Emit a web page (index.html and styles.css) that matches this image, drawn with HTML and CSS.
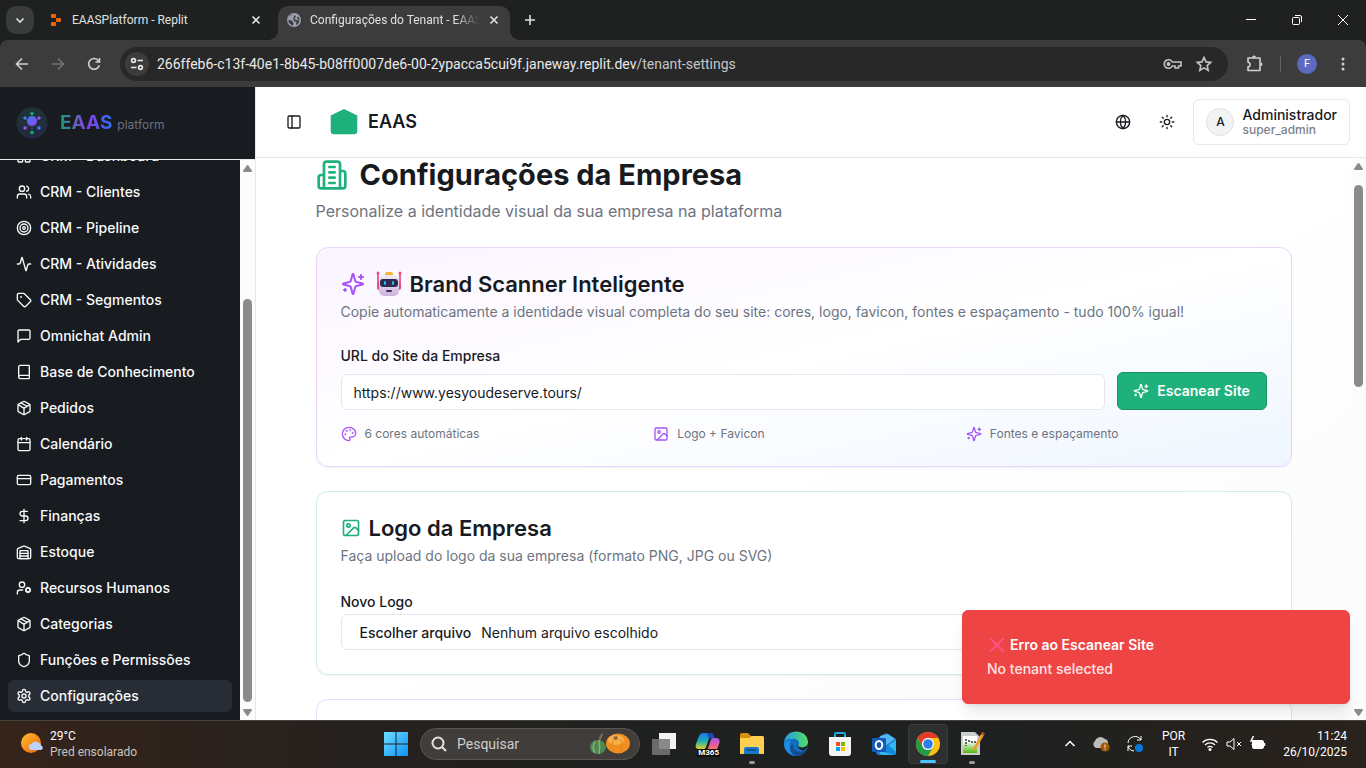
FILE: index.html
```html
<!DOCTYPE html>
<html lang="pt">
<head>
<meta charset="utf-8">
<title>Configurações do Tenant - EAAS</title>
<link rel="stylesheet" href="styles.css">
</head>
<body>
<svg class="sprite" aria-hidden="true">
  <symbol id="dashboard" viewBox="0 0 24 24"><rect x="3" y="3" width="7" height="9" rx="1"/><rect x="14" y="3" width="7" height="5" rx="1"/><rect x="14" y="12" width="7" height="9" rx="1"/><rect x="3" y="16" width="7" height="5" rx="1"/></symbol>
  <symbol id="users" viewBox="0 0 24 24"><path d="M16 21v-2a4 4 0 0 0-4-4H6a4 4 0 0 0-4 4v2"/><circle cx="9" cy="7" r="4"/><path d="M22 21v-2a4 4 0 0 0-3-3.87M16 3.13a4 4 0 0 1 0 7.75"/></symbol>
  <symbol id="target" viewBox="0 0 24 24"><circle cx="12" cy="12" r="10"/><circle cx="12" cy="12" r="6"/><circle cx="12" cy="12" r="2"/></symbol>
  <symbol id="activity" viewBox="0 0 24 24"><path d="M22 12h-2.48a2 2 0 0 0-1.93 1.46l-2.35 8.36a.25.25 0 0 1-.48 0L9.24 2.18a.25.25 0 0 0-.48 0l-2.35 8.36A2 2 0 0 1 4.49 12H2"/></symbol>
  <symbol id="tag" viewBox="0 0 24 24"><path d="M12.586 2.586A2 2 0 0 0 11.172 2H4a2 2 0 0 0-2 2v7.172a2 2 0 0 0 .586 1.414l8.704 8.704a2.426 2.426 0 0 0 3.42 0l6.58-6.58a2.426 2.426 0 0 0 0-3.42z"/><circle cx="7.5" cy="7.5" r=".5"/></symbol>
  <symbol id="message" viewBox="0 0 24 24"><path d="M21 15a2 2 0 0 1-2 2H7l-4 4V5a2 2 0 0 1 2-2h14a2 2 0 0 1 2 2z"/></symbol>
  <symbol id="book" viewBox="0 0 24 24"><path d="M4 19.5v-15A2.5 2.5 0 0 1 6.5 2H19a1 1 0 0 1 1 1v18a1 1 0 0 1-1 1H6.5a1 1 0 0 1 0-5H20"/></symbol>
  <symbol id="package" viewBox="0 0 24 24"><path d="M11 21.73a2 2 0 0 0 2 0l7-4A2 2 0 0 0 21 16V8a2 2 0 0 0-1-1.73l-7-4a2 2 0 0 0-2 0l-7 4A2 2 0 0 0 3 8v8a2 2 0 0 0 1 1.73zM12 22V12"/><path d="m3.3 7 7.703 4.734a2 2 0 0 0 1.994 0L20.7 7M7.5 4.27l9 5.15"/></symbol>
  <symbol id="calendar" viewBox="0 0 24 24"><path d="M8 2v4M16 2v4M3 10h18"/><rect x="3" y="4" width="18" height="18" rx="2"/></symbol>
  <symbol id="card" viewBox="0 0 24 24"><rect x="2" y="5" width="20" height="14" rx="2"/><path d="M2 10h20"/></symbol>
  <symbol id="dollar" viewBox="0 0 24 24"><path d="M12 2v20M17 5H9.5a3.5 3.5 0 0 0 0 7h5a3.5 3.5 0 0 1 0 7H6"/></symbol>
  <symbol id="warehouse" viewBox="0 0 24 24"><path d="M22 8.35V20a2 2 0 0 1-2 2H4a2 2 0 0 1-2-2V8.35A2 2 0 0 1 3.26 6.5l8-3.2a2 2 0 0 1 1.48 0l8 3.2A2 2 0 0 1 22 8.35ZM6 18h12M6 14h12"/><rect x="6" y="10" width="12" height="12"/></symbol>
  <symbol id="usercog" viewBox="0 0 24 24"><circle cx="18" cy="15" r="3"/><circle cx="9" cy="7" r="4"/><path d="M10 15H6a4 4 0 0 0-4 4v2M21.7 16.4l-.9-.3M15.2 13.9l-.9-.3M16.6 18.7l.3-.9M19.1 12.2l.3-.9M19.6 18.7l-.4-1M16.8 12.3l-.4-1M14.3 16.6l1-.4M20.7 13.8l1-.4"/></symbol>
  <symbol id="shield" viewBox="0 0 24 24"><path d="M20 13c0 5-3.5 7.5-7.66 8.95a1 1 0 0 1-.67-.01C7.5 20.5 4 18 4 13V6a1 1 0 0 1 1-1c2 0 4.5-1.2 6.24-2.72a1.17 1.17 0 0 1 1.52 0C14.51 3.81 17 5 19 5a1 1 0 0 1 1 1z"/></symbol>
  <symbol id="settings" viewBox="0 0 24 24"><path d="M12.22 2h-.44a2 2 0 0 0-2 2v.18a2 2 0 0 1-1 1.73l-.43.25a2 2 0 0 1-2 0l-.15-.08a2 2 0 0 0-2.73.73l-.22.38a2 2 0 0 0 .73 2.73l.15.1a2 2 0 0 1 1 1.72v.51a2 2 0 0 1-1 1.74l-.15.09a2 2 0 0 0-.73 2.73l.22.38a2 2 0 0 0 2.73.73l.15-.08a2 2 0 0 1 2 0l.43.25a2 2 0 0 1 1 1.73V20a2 2 0 0 0 2 2h.44a2 2 0 0 0 2-2v-.18a2 2 0 0 1 1-1.73l.43-.25a2 2 0 0 1 2 0l.15.08a2 2 0 0 0 2.73-.73l.22-.39a2 2 0 0 0-.73-2.73l-.15-.08a2 2 0 0 1-1-1.74v-.5a2 2 0 0 1 1-1.74l.15-.09a2 2 0 0 0 .73-2.73l-.22-.38a2 2 0 0 0-2.73-.73l-.15.08a2 2 0 0 1-2 0l-.43-.25a2 2 0 0 1-1-1.73V4a2 2 0 0 0-2-2z"/><circle cx="12" cy="12" r="3"/></symbol>
  <symbol id="panel" viewBox="0 0 24 24"><rect x="3" y="3" width="18" height="18" rx="2"/><path d="M9 3v18"/></symbol>
  <symbol id="globe" viewBox="0 0 24 24"><circle cx="12" cy="12" r="10"/><path d="M12 2a14.5 14.5 0 0 0 0 20 14.5 14.5 0 0 0 0-20M2 12h20"/></symbol>
  <symbol id="sun" viewBox="0 0 24 24"><circle cx="12" cy="12" r="4"/><path d="M12 2v2M12 20v2M4.93 4.93l1.41 1.41M17.66 17.66l1.41 1.41M2 12h2M20 12h2M6.34 17.66l-1.41 1.41M19.07 4.93l-1.41 1.41"/></symbol>
  <symbol id="building" viewBox="0 0 24 24"><path d="M6 22V4a2 2 0 0 1 2-2h8a2 2 0 0 1 2 2v18ZM6 12H4a2 2 0 0 0-2 2v6a2 2 0 0 0 2 2h2M18 9h2a2 2 0 0 1 2 2v9a2 2 0 0 1-2 2h-2M10 6h4M10 10h4M10 14h4M10 18h4"/></symbol>
  <symbol id="sparkles" viewBox="0 0 24 24"><path d="M9.937 15.5A2 2 0 0 0 8.5 14.063l-6.135-1.582a.5.5 0 0 1 0-.962L8.5 9.936A2 2 0 0 0 9.937 8.5l1.582-6.135a.5.5 0 0 1 .963 0L14.063 8.5A2 2 0 0 0 15.5 9.937l6.135 1.581a.5.5 0 0 1 0 .964L15.5 14.063a2 2 0 0 0-1.437 1.437l-1.582 6.135a.5.5 0 0 1-.963 0zM20 3v4M22 5h-4M4 17v2M5 18H3"/></symbol>
  <symbol id="palette" viewBox="0 0 24 24"><circle cx="13.5" cy="6.5" r=".5"/><circle cx="17.5" cy="10.5" r=".5"/><circle cx="8.5" cy="7.5" r=".5"/><circle cx="6.5" cy="12.5" r=".5"/><path d="M12 2C6.5 2 2 6.5 2 12s4.5 10 10 10c.926 0 1.648-.746 1.648-1.688 0-.437-.18-.835-.437-1.125-.29-.289-.438-.652-.438-1.125a1.64 1.64 0 0 1 1.668-1.668h1.996c3.051 0 5.555-2.503 5.555-5.554C21.965 6.012 17.461 2 12 2z"/></symbol>
  <symbol id="image" viewBox="0 0 24 24"><rect x="3" y="3" width="18" height="18" rx="2"/><circle cx="9" cy="9" r="2"/><path d="m21 15-3.086-3.086a2 2 0 0 0-2.828 0L6 21"/></symbol>
</svg>

<div class="tabstrip">
  <button class="tab-search" aria-label="Pesquisar guias"><svg width="12" height="12" viewBox="0 0 12 12"><path d="M2.500 4.500 6 8l3.500-3.500"/></svg></button>
  <div class="tab">
    <svg class="favicon" width="16" height="16" viewBox="0 0 16 16"><g fill="#f26207"><rect x="3" y="2" width="5" height="4" rx="1"/><rect x="8" y="6" width="5" height="4" rx="1"/><rect x="3" y="10" width="5" height="4" rx="1"/></g></svg>
    <span class="tab-title">EAASPlatform - Replit</span>
    <button class="tab-close" aria-label="Fechar guia"><svg width="12" height="12" viewBox="0 0 12 12"><path d="m2.500 2.500 7 7m0-7-7 7"/></svg></button>
  </div>
  <div class="tab tab-active">
    <svg class="favicon" width="16" height="16" viewBox="0 0 16 16"><circle cx="8" cy="8" r="7" fill="#9aa0ac"/><path d="M7 2 3 4.500 2 8l3.500.500 2 2L7 14l-4-3-1-4 2-4zM9 3l1 2-2 1.500 2 1.500 3.500.500L12 12l-2 1 .500-3L8 9 7 6zM12 4l2 4-3-1z" fill="#3c3c3c"/></svg>
    <span class="tab-title">Configurações do Tenant - EAAS</span>
    <button class="tab-close" aria-label="Fechar guia"><svg width="12" height="12" viewBox="0 0 12 12"><path d="m2.500 2.500 7 7m0-7-7 7"/></svg></button>
  </div>
  <button class="new-tab" aria-label="Nova guia"><svg width="12" height="12" viewBox="0 0 12 12"><path d="M6 1v10M1 6h10"/></svg></button>
  <div class="window-controls">
    <button aria-label="Minimizar"><svg width="12" height="12" viewBox="0 0 12 12"><path d="M1 5.500h10"/></svg></button>
    <button aria-label="Restaurar"><svg width="12" height="12" viewBox="0 0 12 12"><rect x="1.500" y="3.500" width="7" height="7" rx="1"/><path d="M4 1.500h5a1.500 1.500 0 0 1 1.500 1.500v5"/></svg></button>
    <button aria-label="Fechar"><svg width="12" height="12" viewBox="0 0 12 12"><path d="m1 1 10 10M11 1 1 11"/></svg></button>
  </div>
</div>
<div class="toolbar-wrap">
<div class="toolbar">
  <div class="nav-buttons">
    <button aria-label="Voltar"><svg width="16" height="16" viewBox="0 0 16 16"><path d="M14 8H3M8 2.500 2.500 8 8 13.500"/></svg></button>
    <button class="dim" aria-label="Avançar"><svg width="16" height="16" viewBox="0 0 16 16"><path d="M2 8h11M8 2.500 13.500 8 8 13.500"/></svg></button>
    <button aria-label="Recarregar"><svg width="16" height="16" viewBox="0 0 16 16"><path d="M13.300 9.200A5.400 5.400 0 1 1 12 4.200l1.500 1.500M13.500 2v4h-4"/></svg></button>
  </div>
  <div class="omnibox">
    <button class="site-info" aria-label="Informações do site"><svg width="16" height="16" viewBox="0 0 16 16"><circle cx="4.500" cy="4.500" r="1.900"/><path d="M8.500 4.500H14M2 11.500h5.500"/><circle cx="11.500" cy="11.500" r="1.900"/></svg></button>
    <div class="url"><span>266ffeb6-c13f-40e1-8b45-b08ff0007de6-00-2ypacca5cui9f.janeway.replit.dev</span><span class="path">/tenant-settings</span></div>
    <button class="omni-btn" aria-label="Senhas"><svg width="20" height="20" viewBox="0 0 20 20"><path d="M10.300 8A4.300 4.300 0 1 0 10.300 12H13v2h3.500v-2H19V8z"/><circle cx="6.500" cy="10" r="1.200" fill="currentColor"/></svg></button>
    <button class="omni-btn" aria-label="Favoritos"><svg width="18" height="18" viewBox="0 0 18 18"><path d="m9 2.500 2 4.400 4.700.500-3.500 3.200 1 4.700L9 12.900l-4.200 2.400 1-4.700-3.500-3.200 4.700-.500z"/></svg></button>
  </div>
  <button aria-label="Extensões"><svg width="20" height="20" viewBox="0 0 20 20"><path d="M4 4h12v12.500H4v-3.700c2.800 0 2.800-4.600 0-4.600z" stroke-linejoin="round"/><path d="M8 3.500a2 2 0 0 1 4 0zM16.500 8.200a2 2 0 0 1 0 4z" fill="currentColor" stroke="none"/></svg></button>
  <span class="divider"></span>
  <button class="profile" aria-label="Perfil">F</button>
  <button class="menu-dots" aria-label="Menu"><svg width="16" height="16" viewBox="0 0 16 16"><g fill="currentColor" stroke="none"><circle cx="8" cy="3" r="1.500"/><circle cx="8" cy="8" r="1.500"/><circle cx="8" cy="13" r="1.500"/></g></svg></button>
</div>
</div>

<div class="app">
  <aside class="sidebar">
    <div class="brand">
      <svg width="32" height="32" viewBox="0 0 32 32">
        <defs><linearGradient id="lg" x1="0" y1="0" x2="0" y2="1"><stop offset="0" stop-color="#1c3435"/><stop offset="1" stop-color="#252941"/></linearGradient><linearGradient id="core" x1="0" y1="0" x2="1" y2="1"><stop offset="0" stop-color="#3d7df2"/><stop offset="1" stop-color="#9146f2"/></linearGradient></defs>
        <circle cx="16" cy="16" r="15.500" fill="url(#lg)"/>
        <path d="M16 6v20M9 11l14 10M23 11 9 21" stroke="#35466e" stroke-width="1"/>
        <circle cx="16" cy="14" r="5" fill="url(#core)"/>
        <g fill="#17a673"><circle cx="16" cy="6.500" r="1.800"/><circle cx="16" cy="25.500" r="1.800"/></g>
        <g fill="#3b82f6"><circle cx="9" cy="11" r="1.700"/><circle cx="23" cy="21" r="1.700"/></g>
        <g fill="#a050f5"><circle cx="23" cy="11" r="1.700"/><circle cx="9" cy="21" r="1.700"/></g>
      </svg>
      <div class="brand-text"><span class="brand-name">EAAS</span><span class="brand-sub">platform</span></div>
    </div>
    <div class="side-scroll">
      <nav class="menu">
        <a href="#"><svg class="i16"><use href="#dashboard"/></svg>CRM - Dashboard</a>
        <a href="#"><svg class="i16"><use href="#users"/></svg>CRM - Clientes</a>
        <a href="#"><svg class="i16"><use href="#target"/></svg>CRM - Pipeline</a>
        <a href="#"><svg class="i16"><use href="#activity"/></svg>CRM - Atividades</a>
        <a href="#"><svg class="i16"><use href="#tag"/></svg>CRM - Segmentos</a>
        <a href="#"><svg class="i16"><use href="#message"/></svg>Omnichat Admin</a>
        <a href="#"><svg class="i16"><use href="#book"/></svg>Base de Conhecimento</a>
        <a href="#"><svg class="i16"><use href="#package"/></svg>Pedidos</a>
        <a href="#"><svg class="i16"><use href="#calendar"/></svg>Calendário</a>
        <a href="#"><svg class="i16"><use href="#card"/></svg>Pagamentos</a>
        <a href="#"><svg class="i16"><use href="#dollar"/></svg>Finanças</a>
        <a href="#"><svg class="i16"><use href="#warehouse"/></svg>Estoque</a>
        <a href="#"><svg class="i16"><use href="#usercog"/></svg>Recursos Humanos</a>
        <a href="#"><svg class="i16"><use href="#package"/></svg>Categorias</a>
        <a href="#"><svg class="i16"><use href="#shield"/></svg>Funções e Permissões</a>
        <a href="#" class="current"><svg class="i16"><use href="#settings"/></svg>Configurações</a>
      </nav>
      <div class="scrollbar">
        <svg width="15" height="16" viewBox="0 0 15 16"><path d="M7.500 6 11 11H4z"/></svg>
        <div class="track"><span style="flex-grow:123"></span><span class="thumb" style="flex-grow:403"></span><span style="flex-grow:2"></span></div>
        <svg width="15" height="16" viewBox="0 0 15 16"><path d="M7.500 11 11 6H4z"/></svg>
      </div>
    </div>
  </aside>

  <div class="main">
    <header class="topbar">
      <button class="toggle" aria-label="Alternar menu"><svg class="i16"><use href="#panel"/></svg></button>
      <div class="company">
        <svg width="32" height="32" viewBox="0 0 32 32"><path d="M16 3 29.300 9.400V25a3.300 3.300 0 0 1-3.300 3.300H6A3.300 3.300 0 0 1 2.700 25V9.400z" fill="#1eb17b"/></svg>
        <span>EAAS</span>
      </div>
      <div class="actions">
        <button class="icon-btn" aria-label="Idioma"><svg class="i16"><use href="#globe"/></svg></button>
        <button class="icon-btn" aria-label="Tema"><svg class="i16"><use href="#sun"/></svg></button>
        <button class="user"><span class="avatar">A</span><span class="user-text"><span class="user-name">Administrador</span><span class="user-role">super_admin</span></span></button>
      </div>
    </header>
    <div class="body-row">
      <main class="content">
        <div class="page">
          <div class="page-head">
            <h1><svg class="i32 green"><use href="#building"/></svg>Configurações da Empresa</h1>
            <p>Personalize a identidade visual da sua empresa na plataforma</p>
          </div>

          <section class="panel scanner">
            <h2><svg class="i24 purple"><use href="#sparkles"/></svg><span class="robot-title">
              <svg width="32" height="28" viewBox="0 0 32 28">
                <defs><linearGradient id="face" x1="0" y1="0" x2="0" y2="1"><stop offset="0" stop-color="#f2e9f5"/><stop offset="1" stop-color="#cdb4de"/></linearGradient></defs>
                <path d="M5 3v14M27 3v14" stroke="#e0356f" stroke-width="1.500"/><circle cx="5" cy="3" r="1.500" fill="#f8447f"/><circle cx="27" cy="3" r="1.500" fill="#f8447f"/>
                <rect x="4" y="12" width="24" height="8" rx="2" fill="#e94b7f"/>
                <rect x="12" y="2" width="8" height="5" rx="2" fill="#f7b531"/>
                <rect x="6" y="5" width="20" height="21" rx="5" fill="url(#face)"/>
                <rect x="7" y="9" width="18" height="8" rx="3" fill="#31284f"/>
                <rect x="11" y="11" width="2" height="4" rx="1" fill="#28b7f6"/><rect x="19" y="11" width="2" height="4" rx="1" fill="#28b7f6"/>
                <rect x="13" y="20" width="6" height="2" rx="1" fill="#3b3050"/>
              </svg>Brand Scanner Inteligente</span></h2>
            <p class="desc">Copie automaticamente a identidade visual completa do seu site: cores, logo, favicon, fontes e espaçamento - tudo 100% igual!</p>
            <div class="scan-form">
              <div class="field">
                <label for="site-url">URL do Site da Empresa</label>
                <input id="site-url" type="text" value="https://www.yesyoudeserve.tours/">
              </div>
              <button class="scan-btn"><svg class="i16"><use href="#sparkles"/></svg>Escanear Site</button>
            </div>
            <div class="features">
              <div><svg class="i16 purple"><use href="#palette"/></svg>6 cores automáticas</div>
              <div><svg class="i16 purple"><use href="#image"/></svg>Logo + Favicon</div>
              <div><svg class="i16 purple"><use href="#sparkles"/></svg>Fontes e espaçamento</div>
            </div>
          </section>

          <section class="panel logo-panel">
            <h2><svg class="i20 green"><use href="#image"/></svg>Logo da Empresa</h2>
            <p class="desc">Faça upload do logo da sua empresa (formato PNG, JPG ou SVG)</p>
            <div class="upload">
              <label for="logo-file">Novo Logo</label>
              <label class="file-box" for="logo-file"><span class="file-btn">Escolher arquivo</span><span>Nenhum arquivo escolhido</span></label>
              <input id="logo-file" class="file-input" type="file">
            </div>
          </section>

          <section class="panel next-panel"></section>
        </div>
      </main>
      <div class="scrollbar">
        <svg width="15" height="16" viewBox="0 0 15 16"><path d="M7.500 6 11 11H4z"/></svg>
        <div class="track"><span style="flex-grow:11"></span><span class="thumb" style="flex-grow:202"></span><span style="flex-grow:317"></span></div>
        <svg width="15" height="16" viewBox="0 0 15 16"><path d="M7.500 11 11 6H4z"/></svg>
      </div>
    </div>
  </div>

  <div class="toast" role="alert">
    <div class="toast-title"><svg width="18" height="18" viewBox="0 0 18 18"><path d="m4 3 12 12M16 3 4 15" stroke="#ff4f8b" stroke-width="2" stroke-linecap="round"/></svg>Erro ao Escanear Site</div>
    <div class="toast-text">No tenant selected</div>
  </div>
</div>

<footer class="taskbar">
  <div class="weather">
    <svg width="24" height="24" viewBox="0 0 24 24"><defs><linearGradient id="sg" x1="0" y1="0" x2="1" y2="1"><stop offset="0" stop-color="#fbc02d"/><stop offset="1" stop-color="#f0610f"/></linearGradient></defs><circle cx="11" cy="11" r="10" fill="url(#sg)"/><path d="M12 18a3 3 0 0 1-.500-6 4.500 4.500 0 0 1 7.500-1 2.500 2.500 0 0 1 2 2.500 2.300 2.300 0 0 1 0 4.500z" fill="#b9d3fa"/></svg>
    <div class="weather-text"><span>29°C</span><span class="soft">Pred ensolarado</span></div>
  </div>
  <div class="dock">
    <button class="dock-btn" aria-label="Iniciar"><svg width="24" height="24" viewBox="0 0 24 24"><defs><linearGradient id="win" x1="0" y1="0" x2="1" y2="1"><stop offset="0" stop-color="#70dcff"/><stop offset="1" stop-color="#0a93f8"/></linearGradient></defs><path d="M0 0h11.500v11.500H0zM12.500 0H24v11.500H12.500zM0 12.500h11.500V24H0zM12.500 12.500H24V24H12.500z" fill="url(#win)"/></svg></button>
    <button class="search">
      <svg width="18" height="18" viewBox="0 0 18 18"><circle cx="8" cy="8" r="5.500" fill="none" stroke="#e4e2e1" stroke-width="2"/><path d="m12 12 4 4" stroke="#e4e2e1" stroke-width="2"/></svg>
      <span>Pesquisar</span>
      <svg width="42" height="24" viewBox="0 0 42 24"><path d="M10 9C9 5 12 3 13 1l1 .500c0 3-2 4-2 7z" fill="#7b6a55"/><ellipse cx="9" cy="15" rx="8" ry="7" fill="#4e8650"/><path d="M6 9c-2 4-2 9 0 12M10 8c1 5 1 9 0 14" stroke="#83b07e" stroke-width="1.500" fill="none"/><ellipse cx="29" cy="11.500" rx="12" ry="10" fill="#f08e1f"/><ellipse cx="27" cy="8" rx="8" ry="5" fill="#f9ae48"/><path d="M25 7c-3 4-2 10 1 14M31 7c3 4 3 10 0 14" stroke="#e5851a" fill="none"/><path d="m24 5 4-1 1 3-3 1z" fill="#8c6742"/></svg>
    </button>
    <button class="dock-btn" aria-label="Visão de tarefas"><svg width="26" height="24" viewBox="0 0 26 24"><rect x="8" y="1" width="17" height="16" fill="#f1f1f1"/><rect x="1" y="7" width="18" height="16" fill="#777" opacity=".85"/></svg></button>
    <button class="dock-btn" aria-label="M365 Copilot"><svg width="26" height="24" viewBox="0 0 26 24"><defs><linearGradient id="ca" x1="0" y1="0" x2="0" y2="1"><stop offset="0" stop-color="#1f72e6"/><stop offset=".5" stop-color="#1bb0b5"/><stop offset="1" stop-color="#ded12c"/></linearGradient><linearGradient id="cb" x1="0" y1="0" x2="0" y2="1"><stop offset="0" stop-color="#a25af2"/><stop offset=".6" stop-color="#ee5b96"/><stop offset="1" stop-color="#fb8652"/></linearGradient></defs><path d="M8 1h8l-5 14c-.500 1.500-1 2-3 2H4c-3 0-4-2-3-5l3-8c1-2 2-3 4-3z" fill="url(#ca)"/><path d="M12 1h4c2 0 3 2 3.500 5h-6z" fill="#174bb7"/><path d="M18 6h3c3 0 4 2 3.500 5l-2 5c-1 2-2 2-4 2h-6l3-9c.500-2 1-3 2.500-3z" fill="url(#cb)"/></svg><span class="m365">M365</span></button>
    <button class="dock-btn running" aria-label="Explorador de arquivos"><svg width="26" height="24" viewBox="0 0 26 24"><path d="M1 3a2 2 0 0 1 2-2h6l3 3h11a2 2 0 0 1 2 2v6H1z" fill="#d9920c"/><path d="M1 6h9l3-2h10a2 2 0 0 1 2 2v16H1z" fill="#ffd04f"/><path d="M5 22v-5a2 2 0 0 1 2-2h11a2 2 0 0 1 2 2v5z" fill="#1976c5"/><path d="M8 18h9" stroke="#0d539a" stroke-width="2"/></svg></button>
    <button class="dock-btn" aria-label="Edge"><svg width="26" height="26" viewBox="0 0 26 26"><defs><linearGradient id="ed" x1="0" y1="0" x2="1" y2="0"><stop offset="0" stop-color="#239ce4"/><stop offset="1" stop-color="#55df65"/></linearGradient></defs><circle cx="13" cy="13" r="12" fill="#126cc0"/><path d="M14 14c3 2 7 1 8-1l3-1c0 3-1 5-3 7-3 1-7-1-8-5z" fill="#1f2120"/><path d="M1 12C2-3 24-3 25 11c0 5-6 7-10 4 3-4-1-8-6-7-4 0-7 1-8 4z" fill="url(#ed)"/><path d="M10 9C4 10 6 24 16 25 7 26 1 19 1 12c2-2 5-3 9-3z" fill="#1c8ee0"/><path d="M10 13c-1 7 6 10 13 6-3 6-8 7-12 5-5-3-5-9-1-11z" fill="#164b8f"/></svg></button>
    <button class="dock-btn" aria-label="Microsoft Store"><svg width="26" height="26" viewBox="0 0 26 26"><path d="M8 7V3a1 1 0 0 1 1-1h8a1 1 0 0 1 1 1v4" fill="none" stroke="#20a5df" stroke-width="2"/><path d="M2 6h22v16a3 3 0 0 1-3 3H5a3 3 0 0 1-3-3z" fill="#f4f4f4"/><path d="M9 11h4v4H9z" fill="#f25022"/><path d="M14 11h4v4h-4z" fill="#7fba00"/><path d="M9 16h4v4H9z" fill="#00a4ef"/><path d="M14 16h4v4h-4z" fill="#ffb900"/></svg></button>
    <button class="dock-btn" aria-label="Outlook"><svg width="26" height="26" viewBox="0 0 26 26"><path d="m5 8 10-6 10 6v13a3 3 0 0 1-3 3H8a3 3 0 0 1-3-3z" fill="#2079cf"/><path d="m9 5 8-2 7 5-13 9z" fill="#52b8f3"/><path d="m25 9-17 12 2 3h12a3 3 0 0 0 3-3z" fill="#31b8ee"/><path d="m17 14 8 7-2 3-14-4z" fill="#1686dc"/><rect x="1" y="7" width="14" height="14" rx="1" fill="#1259b8"/><ellipse cx="8" cy="14" rx="3.300" ry="4" fill="none" stroke="#fff" stroke-width="2"/></svg></button>
    <button class="dock-btn focused" aria-label="Chrome"><svg width="26" height="26" viewBox="0 0 26 26"><circle cx="13" cy="13" r="12" fill="#fbc116"/><path d="M2.600 7A12 12 0 0 1 23.400 7H13a6 6 0 0 0-5.200 9z" fill="#e33b2e"/><path d="M2.600 7A12 12 0 0 0 13 25l5.200-9a6 6 0 0 1-10.400 0z" fill="#249b4b"/><circle cx="13" cy="13" r="6" fill="#fff"/><circle cx="13" cy="13" r="4.800" fill="#2d7cf0"/></svg></button>
    <button class="dock-btn running" aria-label="Editor"><svg width="26" height="26" viewBox="0 0 26 26"><defs><linearGradient id="np" x1="0" y1="0" x2="0" y2="1"><stop offset=".3" stop-color="#fff"/><stop offset="1" stop-color="#52b80a"/></linearGradient></defs><path d="M2 1h14l5 5v18H2z" fill="#c9ced0"/><path d="M4 5h14v17H4z" fill="url(#np)"/><path d="M7 8v7M10 9v3M12 11h5" stroke="#333" stroke-width="1.500" stroke-dasharray="2 1"/><path d="m22 3 3 1-8 14-3 2 1-4z" fill="#ef9c31"/><path d="m22 3 1-2 3 1-1 2z" fill="#b34c38"/></svg></button>
  </div>
  <div class="tray">
    <svg width="12" height="12" viewBox="0 0 12 12"><path d="m1.500 8 4.500-4.500L10.500 8" fill="none" stroke="#fff" stroke-width="1.500"/></svg>
    <svg width="18" height="18" viewBox="0 0 18 18"><path d="M4 13a4 4 0 0 1-1-7 6 6 0 0 1 10-2 4 4 0 0 1 3 4v5z" fill="#bcbcbc"/><circle cx="13" cy="12" r="4.500" fill="#a35900"/><path d="M13 9.500v3M13 13.500v1" stroke="#fff"/></svg>
    <svg width="18" height="18" viewBox="0 0 18 18"><path d="M2 8a7 7 0 0 1 13-3M15 1v4h-4M8 16a7 7 0 0 1-6-5M2 16v-5h4" fill="none" stroke="#fff"/><circle cx="13" cy="13" r="4" fill="#0878d7"/></svg>
    <div class="lang"><span>POR</span><span>IT</span></div>
    <div class="status">
      <svg width="18" height="16" viewBox="0 0 18 16"><g fill="none" stroke="#fff" stroke-width="1.200"><path d="M1.500 6.500a10.500 10.500 0 0 1 15 0M4 9a7 7 0 0 1 10 0M6.500 11.500a3.500 3.500 0 0 1 5 0"/></g><circle cx="9" cy="13.500" r="1.500" fill="#fff"/></svg>
      <svg width="18" height="16" viewBox="0 0 18 16"><path d="M2 6h3l4-3.500v11L5 10H2zM12 6l4 4M16 6l-4 4" fill="none" stroke="#fff"/></svg>
      <svg width="18" height="16" viewBox="0 0 18 16"><rect x="3.500" y="4.500" width="11" height="8" rx="1.500" fill="#fff" stroke="#fff"/><path d="M15.500 7v3M4.500 0 2 5h3L3 9" fill="none" stroke="#fff" stroke-width="1.500"/></svg>
    </div>
    <div class="clock"><span>11:24</span><span>26/10/2025</span></div>
  </div>
</footer>
</body>
</html>
```
FILE: styles.css
```css
* { box-sizing: border-box; }
body {
  margin: 0;
  height: 100vh;
  display: flex;
  flex-direction: column;
  overflow: hidden;
  font-family: Inter, "Liberation Sans", sans-serif;
  font-size: 14px;
  line-height: 20px;
  color: #171a1f;
  background: #1f2120;
}
h1, h2, p { margin: 0; }
button { margin: 0; padding: 0; border: 0; background: none; color: inherit; font: inherit; display: flex; align-items: center; justify-content: center; }
svg { flex: none; display: block; }
.sprite { position: absolute; width: 0; height: 0; }
.i16, .i20, .i24, .i32 { fill: none; stroke: currentColor; stroke-width: 2; stroke-linecap: round; stroke-linejoin: round; }
.i16 { width: 16px; height: 16px; }
.i20 { width: 20px; height: 20px; }
.i24 { width: 24px; height: 24px; }
.i32 { width: 32px; height: 32px; }
.green { color: #1eb17b; }
.purple { color: #a855f7; }

/* Browser window */
.tabstrip, .toolbar-wrap, .taskbar { font-family: Roboto, "Open Sans", sans-serif; flex: none; }
.tabstrip { height: 40px; display: flex; align-items: center; background: #1f2120; color: #dfe1e1; font-size: 12px; padding-left: 6px; }
.tabstrip svg, .toolbar svg { fill: none; stroke: currentColor; stroke-width: 1.600; }
.tabstrip .favicon { stroke: none; }
.tab-search { width: 28px; height: 28px; border-radius: 10px; background: #3a3b3b; margin-right: 4px; }
.tab { width: 240px; height: 34px; align-self: flex-end; display: flex; align-items: center; padding: 0 16px 6px 10px; gap: 8px; }
.tab-title { flex: 1; min-width: 0; overflow: hidden; white-space: nowrap; }
.tab-close { width: 12px; height: 20px; }
.tab-active { width: 232px; padding-left: 8px; padding-right: 10px; background: #3c3c3c; border-radius: 10px 10px 0 0; position: relative; }
.tab-active .tab-title { mask-image: linear-gradient(90deg, #000 85%, transparent); }
.tab-active::before, .tab-active::after { content: ""; position: absolute; bottom: 0; width: 10px; height: 10px; }
.tab-active::before { right: 100%; background: radial-gradient(circle at 0 0, transparent 10px, #3c3c3c 10px); }
.tab-active::after { left: 100%; background: radial-gradient(circle at 100% 0, transparent 10px, #3c3c3c 10px); }
.new-tab { width: 28px; height: 28px; margin-left: 6px; }
.window-controls { margin-left: auto; display: flex; color: #fff; }
.window-controls button { width: 46px; height: 40px; }
.window-controls svg { stroke-width: 1; }
.toolbar-wrap { background: #1f2120; }
.toolbar { height: 47px; display: flex; align-items: center; gap: 12px; padding: 0 9px 0 8px; background: #3c3c3c; border-radius: 8px 8px 0 0; color: #d0d2d2; }
.toolbar button { width: 28px; height: 28px; }
.nav-buttons { display: flex; gap: 8px; }
.nav-buttons .dim { color: #747676; }
.omnibox { flex: 1; height: 34px; display: flex; align-items: center; padding: 0 10px 0 5px; border-radius: 17px; background: #282828; color: #e8e8e8; gap: 4px; }
.toolbar .site-info { width: 24px; height: 24px; border-radius: 50%; background: #3c3c3c; margin-right: 4px; }
.toolbar .omni-btn { color: #c4c6c6; }
.url { flex: 1; min-width: 0; font-size: 14px; white-space: nowrap; overflow: hidden; }
.path { color: #c4c6c6; }
.divider { width: 1px; height: 16px; background: #626464; }
.toolbar .profile { width: 20px; height: 20px; margin: 0 4px; border-radius: 50%; background: #5c6bc0; font-size: 11px; color: #fff; }
.menu-dots { margin-left: -4px; }

/* App */
.app { flex: 1; min-height: 0; display: flex; position: relative; background: #fff; }
.sidebar { width: 256px; flex: none; display: flex; flex-direction: column; background: #181b20; border-right: 1px solid #e5e7eb; color: #f8fafb; }
.brand { height: 73px; flex: none; display: flex; align-items: center; gap: 12px; padding: 0 16px; border-bottom: 1px solid #e8eaec; }
.brand-text { display: flex; align-items: baseline; gap: 5px; }
.brand-name { font-size: 19px; line-height: 24px; font-weight: 700; background: linear-gradient(90deg, #179c72, #8a3fe6 50%, #2f6cf0); background-clip: text; color: transparent; }
.brand-sub { font-size: 12px; color: #6b7280; }
.side-scroll { flex: 1; min-height: 0; display: flex; }
.menu { flex: 1; display: flex; flex-direction: column; justify-content: flex-end; gap: 4px; padding: 8px; overflow: hidden; }
.menu a { height: 32px; flex: none; display: flex; align-items: center; gap: 8px; padding: 0 8px; border-radius: 6px; color: inherit; text-decoration: none; font-weight: 500; }
.menu .current { background: #282c35; }
.scrollbar { width: 15px; flex: none; display: flex; flex-direction: column; background: #fcfcfc; fill: #8b8b8b; stroke: #8b8b8b; stroke-width: 2; stroke-linejoin: round; }
.track { flex: 1; display: flex; flex-direction: column; align-items: center; }
.thumb { width: 9px; border-radius: 5px; background: #8b8b8b; }
.main { flex: 1; min-width: 0; display: flex; flex-direction: column; }
.topbar { height: 71px; flex: none; display: flex; align-items: center; gap: 20px; padding: 0 16px 0 24px; border-bottom: 1px solid #e5e7eb; }
.toggle { width: 28px; height: 28px; }
.company { display: flex; align-items: center; gap: 8px; font-size: 18px; font-weight: 600; }
.actions { margin-left: auto; display: flex; align-items: center; gap: 8px; }
.icon-btn { width: 36px; height: 36px; }
.user { height: 46px; gap: 8px; padding: 0 12px; border: 1px solid #e5e7eb; border-radius: 6px; background: #fff; }
.avatar { width: 28px; height: 28px; display: flex; align-items: center; justify-content: center; border: 1px solid #dfe2e5; border-radius: 50%; background: #f1f3f4; font-size: 12px; font-weight: 500; }
.user-text { display: flex; flex-direction: column; align-items: flex-start; line-height: 15px; font-weight: 500; }
.user-name { font-size: 14px; }
.user-role { font-size: 12px; color: #7b818d; }
.body-row { flex: 1; min-height: 0; display: flex; }
.content { flex: 1; min-width: 0; overflow: hidden; background: linear-gradient(to bottom right, #fff 50%, #fafafa); }
.page { max-width: 1024px; margin: 0 auto; padding: 0 24px; display: flex; flex-direction: column; gap: 24px; }
.page-head { display: flex; flex-direction: column; gap: 8px; }
h1 { display: flex; align-items: center; gap: 12px; font-size: 29px; line-height: 33px; font-weight: 700; }
.page-head p { font-size: 16px; line-height: 24px; color: #6d747f; }
.panel { border: 1px solid #d0f0e3; border-radius: 12px; padding: 24px; background: #fff; box-shadow: 0 1px 2px rgba(0, 0, 0, .05); }
.scanner { border-color: #e9d5ff; background: linear-gradient(to bottom right, #faf5ff, #fff 50%, #eff6ff); }
.next-panel { border-color: #ecdcfb; height: 180px; }
h2 { display: flex; align-items: center; gap: 8px; height: 24px; font-size: 22px; line-height: 24px; font-weight: 600; }
.robot-title { display: flex; align-items: center; gap: 5px; }
.desc { margin-top: 6px; color: #6d747f; }
.scan-form { margin-top: 24px; display: flex; align-items: flex-end; gap: 12px; }
.field { flex: 1; display: flex; flex-direction: column; gap: 8px; }
label { font-weight: 500; }
.field input { width: 100%; height: 36px; padding: 0 12px; border: 1px solid #e5e7eb; border-radius: 6px; background: #fff; font: inherit; color: inherit; }
.scan-btn { height: 38px; width: 150px; gap: 8px; border: 1px solid #16935f; border-radius: 6px; background: #1eb17b; color: #fff; font-weight: 600; }
.features { margin-top: 16px; display: grid; grid-template-columns: repeat(3, 1fr); gap: 12px; font-size: 12px; line-height: 16px; color: #6d747f; }
.features div { display: flex; align-items: center; gap: 8px; }
.upload { margin-top: 24px; display: flex; flex-direction: column; line-height: 24px; position: relative; }
.file-box { height: 36px; display: flex; align-items: center; gap: 10px; padding: 2px 18px 0; border: 1px solid #e5e7eb; border-radius: 6px; background: #fff; font-weight: 400; }
.file-btn { font-weight: 500; }
.file-input { position: absolute; width: 1px; height: 1px; bottom: 0; opacity: 0; }
.toast { position: absolute; right: 16px; bottom: 16px; width: 388px; padding: 24px; border: 1px solid #ef4444; border-radius: 6px; background: #ef4444; color: #fff; box-shadow: 0 10px 15px -3px rgba(0, 0, 0, .1), 0 4px 6px -4px rgba(0, 0, 0, .1); display: flex; flex-direction: column; gap: 4px; }
.toast-title { display: flex; align-items: center; gap: 5px; font-weight: 600; }
.toast-text { color: #fde3e3; font-weight: 500; }

/* Taskbar */
.taskbar { height: 48px; display: grid; grid-template-columns: 1fr auto 1fr; align-items: center; padding-left: 2px; box-shadow: inset 0 1px #454240; background: linear-gradient(90deg, #35241a, #26211e 25%, #1e2120 50%, #1f2120 75%, #2a221c); color: #fff; font-size: 12px; line-height: 16px; }
.weather { display: flex; align-items: center; gap: 6px; padding-left: 18px; }
.weather-text, .lang, .clock { display: flex; flex-direction: column; }
.soft { color: #c9c3bf; }
.dock { display: flex; align-items: center; gap: 4px; }
.dock-btn { width: 40px; height: 40px; position: relative; border-radius: 4px; }
.running::after, .focused::after { content: ""; position: absolute; bottom: 0; width: 6px; height: 3px; border-radius: 2px; background: #9b9b9b; }
.focused { background: #2d302f; border: 1px solid #383b3a; }
.focused::after { width: 16px; background: #4cc2ff; }
.m365 { position: absolute; right: 8px; bottom: 7px; padding: 0 1px; background: #111; font-size: 8px; font-weight: 700; line-height: 8px; }
.search { width: 220px; height: 32px; justify-content: flex-start; gap: 9px; padding: 0 8px 0 9px; border: 1px solid #5a5654; border-radius: 16px; background: #403d3b; color: #cfcccb; font-size: 14px; }
.search span { flex: 1; text-align: left; }
.tray { display: flex; align-items: center; justify-content: flex-end; gap: 16px; padding-right: 19px; }
.lang { align-items: center; margin-left: 2px; }
.status { display: flex; gap: 6px; }
.clock { align-items: flex-end; }
```
